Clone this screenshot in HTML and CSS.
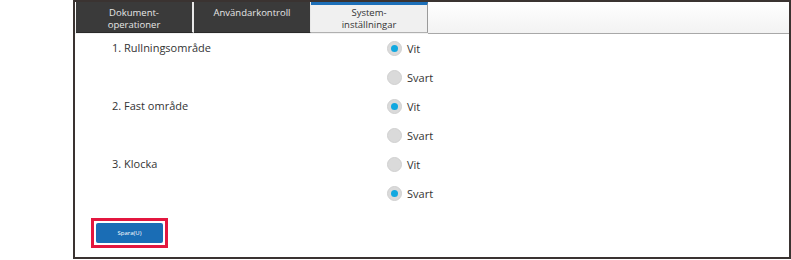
FILE: index.html
```html
<!DOCTYPE html>
<html lang="sv">

<head>
    <meta charset="UTF-8">
    <meta name="viewport" content="width=device-width, initial-scale=1.0">
    <title>Systeminställningar</title>
    <link rel="stylesheet" href="styles.css">
</head>

<body>
    <div class="frame">
        <div class="tabs">
            <div class="tab">Dokument-<br>operationer</div>
            <div class="tab narrow">Användarkontroll</div>
            <div class="tab active">System-<br>inställningar</div>
            <div class="tab-rest"></div>
        </div>

        <div class="settings">
            <div class="label">1. Rullningsområde</div>
            <div class="options">
                <div class="option"><span class="radio checked"></span>Vit</div>
                <div class="option"><span class="radio"></span>Svart</div>
            </div>

            <div class="label">2. Fast område</div>
            <div class="options">
                <div class="option"><span class="radio checked"></span>Vit</div>
                <div class="option"><span class="radio"></span>Svart</div>
            </div>

            <div class="label">3. Klocka</div>
            <div class="options">
                <div class="option"><span class="radio"></span>Vit</div>
                <div class="option"><span class="radio checked"></span>Svart</div>
            </div>
        </div>

        <div class="actions">
            <div class="highlight">
                <button type="button" class="save">Spara(U)</button>
            </div>
        </div>
    </div>
</body>

</html>
```

FILE: styles.css
```css
body {
    margin: 0;
    font-family: 'Open Sans', 'Noto Sans', sans-serif;
    background-color: #ffffff;
    color: #333333;
}

.frame {
    margin-left: 73px;
    width: 714px;
    height: 255px;
    border: 2px solid #3a3331;
    /* Ram */
    background-color: #ffffff;
}

.tabs {
    display: flex;
    height: 32px;
    padding-left: 1px;
    background: linear-gradient(#ffffff, #f2f2f2);
}

.tab {
    width: 118px;
    height: 31px;
    box-sizing: border-box;
    padding-top: 5px;
    background-color: #3a3a3a;
    color: #e6e6e6;
    font-size: 9.5px;
    line-height: 12px;
    text-align: center;
    border-right: 2px solid #e8e8e8;
    border-bottom: 1px solid #2a2a2a;
}

.tab.narrow {
    width: 117px;
    border-right-width: 1px;
}

.tab.active {
    width: 117px;
    background-color: #f0f0f0;
    color: #333333;
    border-top: 3px solid #1d6fb8;
    /* Blå markering */
    padding-top: 2px;
    border-right: 1px solid #9a9a9a;
    border-bottom: 1px solid #b0b0b0;
}

.tab-rest {
    flex: 1;
    height: 31px;
    border-bottom: 1px solid #a8a8a8;
}

.settings {
    display: grid;
    grid-template-columns: 275px 1fr;
    padding-left: 37px;
    font-size: 11px;
}

.label {
    padding-top: 6px;
}

.option {
    display: flex;
    align-items: center;
    height: 29px;
    gap: 5px;
}

.radio {
    width: 15px;
    height: 15px;
    border-radius: 50%;
    background-color: #dadada;
    box-sizing: border-box;
    border: 1px solid #d0d0d0;
    position: relative;
}

.radio.checked::after {
    content: "";
    position: absolute;
    left: 3px;
    top: 3px;
    width: 7px;
    height: 7px;
    border-radius: 50%;
    background-color: #11a8e0;
}

.actions {
    padding: 10px 0 0 16px;
}

.highlight {
    display: inline-block;
    border: 3px solid #e3173f;
    /* Röd ram */
    padding: 2px;
}

.save {
    display: block;
    width: 67px;
    height: 20px;
    padding: 0;
    border: none;
    border-radius: 2px;
    background-color: #1a6db5;
    color: #ffffff;
    font-family: 'Open Sans', sans-serif;
    font-size: 6px;
    cursor: pointer;
}
```
